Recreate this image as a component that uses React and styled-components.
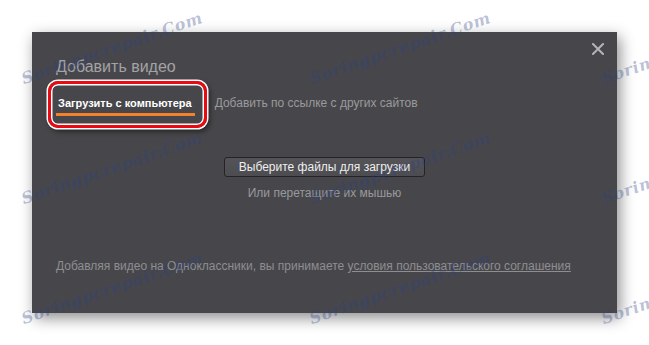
import React from 'react';
import styled, { createGlobalStyle } from 'styled-components';

const GlobalStyle = createGlobalStyle`
  html, body {
    margin: 0;
    padding: 0;
    background: #ffffff;
  }
  body {
    font-family: Arial, 'Liberation Sans', sans-serif;
  }
`;

const Page = styled.div`
  position: relative;
  width: 649px;
  height: 345px;
  box-sizing: border-box;
  padding: 32px 0 0 32px;
  overflow: hidden;
`;

const Dialog = styled.div`
  position: relative;
  width: 585px;
  height: 281px;
  box-sizing: border-box;
  padding: 25px 24px 0 24px;
  background: #47474b;
  box-shadow: 3px 5px 14px rgba(0, 0, 0, 0.45);
  display: flex;
  flex-direction: column;
`;

const CloseButton = styled.button`
  position: absolute;
  top: 9px;
  right: 11px;
  width: 16px;
  height: 16px;
  padding: 0;
  border: none;
  background: transparent;
  display: flex;
  align-items: center;
  justify-content: center;
  cursor: pointer;
`;

const Title = styled.h2`
  margin: 0;
  font-size: 16px;
  line-height: 19px;
  font-weight: normal;
  color: #a3a3a5;
`;

const Tabs = styled.div`
  display: flex;
  align-items: flex-end;
  gap: 18px;
  margin-top: 20px;
`;

const Tab = styled.div`
  padding: 0 3px 3px 2px;
  font-size: ${({ $active }) => ($active ? '11px' : '12px')};
  line-height: 14px;
  color: ${({ $active }) => ($active ? '#ffffff' : '#9a9a9c')};
  font-weight: ${({ $active }) => ($active ? 'bold' : 'normal')};
  border-bottom: 3px solid
    ${({ $active }) => ($active ? '#f2832c' : 'transparent')};
  white-space: nowrap;
`;

const Upload = styled.div`
  display: flex;
  flex-direction: column;
  align-items: center;
  margin-top: 41px;
  gap: 9px;
`;

const PickButton = styled.button`
  width: 201px;
  height: 20px;
  padding: 0;
  box-sizing: border-box;
  border: 1px solid #242426;
  border-radius: 3px;
  background: linear-gradient(#545458, #4d4d51);
  color: #eeeeee;
  font-family: Arial, 'Liberation Sans', sans-serif;
  font-size: 12px;
  line-height: 18px;
  cursor: pointer;
`;

const Hint = styled.div`
  font-size: 12px;
  line-height: 14px;
  color: #99999b;
`;

const Footer = styled.div`
  margin-top: auto;
  margin-bottom: 40px;
  font-size: 12px;
  line-height: 14px;
  color: #8e8e90;
`;

const FooterLink = styled.a`
  color: #8e8e90;
  text-decoration: underline;
`;

const Annotation = styled.div`
  position: absolute;
  left: 48px;
  top: 81px;
  width: 159px;
  height: 47px;
  box-sizing: border-box;
  border: 3px solid #ec0a12;
  border-radius: 10px;
  box-shadow: 0 0 0 1.5px #ffffff, inset 0 0 0 1.5px #ffffff,
    2px 3px 5px 1px rgba(0, 0, 0, 0.45);
  pointer-events: none;
`;

const Watermark = styled.span`
  position: absolute;
  left: ${({ $x }) => $x}px;
  top: ${({ $y }) => $y}px;
  transform-origin: 0 100%;
  transform: rotate(-19deg);
  font-family: 'DejaVu Serif', 'Liberation Serif', serif;
  font-style: italic;
  font-weight: bold;
  font-size: 16px;
  line-height: 18px;
  letter-spacing: 0.6px;
  color: rgba(40, 62, 135, 0.33);
  white-space: nowrap;
  pointer-events: none;
`;

const marks = [];
[25, 313, 605].forEach((x) => {
  [88, 208, 328].forEach((y) => {
    marks.push({ x, y: y - 18 });
  });
});

const CloseIcon = () => (
  <svg width="12" height="12" viewBox="0 0 12 12">
    <path
      d="M1 1 L11 11 M11 1 L1 11"
      stroke="#b4b4b6"
      strokeWidth="2"
      strokeLinecap="square"
    />
  </svg>
);

const App = () => {
  return (
    <Page>
      <GlobalStyle />
      <Dialog>
        <CloseButton aria-label="Закрыть">
          <CloseIcon />
        </CloseButton>
        <Title>Добавить видео</Title>
        <Tabs>
          <Tab $active>Загрузить с компьютера</Tab>
          <Tab>Добавить по ссылке с других сайтов</Tab>
        </Tabs>
        <Upload>
          <PickButton>Выберите файлы для загрузки</PickButton>
          <Hint>Или перетащите их мышью</Hint>
        </Upload>
        <Footer>
          Добавляя видео на Одноклассники, вы принимаете{' '}
          <FooterLink href="#">условия пользовательского соглашения</FooterLink>
        </Footer>
      </Dialog>
      <Annotation />
      {marks.map((m) => (
        <Watermark key={`${m.x}-${m.y}`} $x={m.x} $y={m.y}>
          Soringpcrepair.Com
        </Watermark>
      ))}
    </Page>
  );
};

export default App;
